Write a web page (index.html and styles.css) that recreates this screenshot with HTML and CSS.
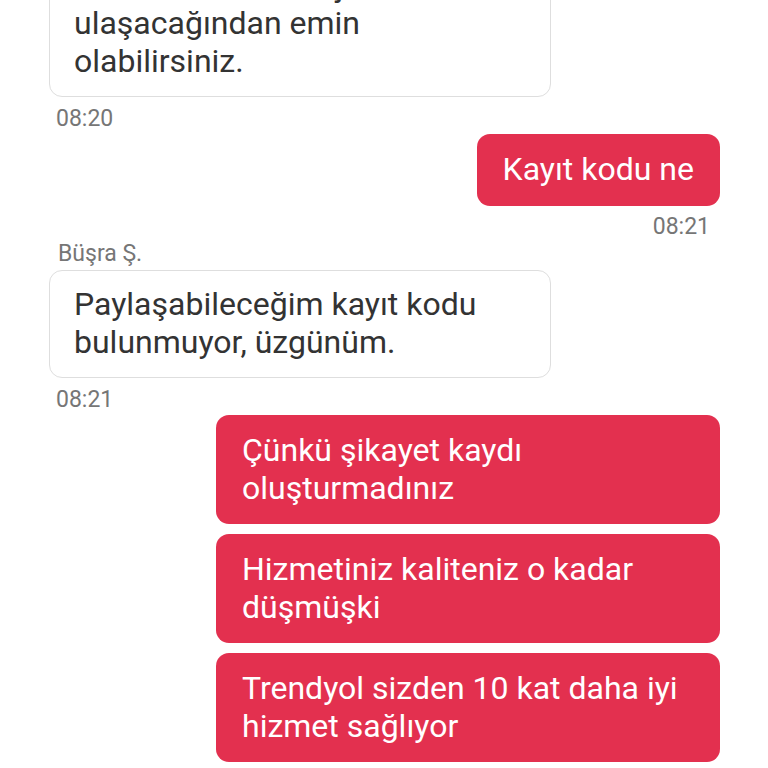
FILE: index.html
```html
<!DOCTYPE html>
<html lang="tr">
<head>
<meta charset="utf-8">
<title>Sohbet</title>
<link rel="stylesheet" href="styles.css">
</head>
<body>
<div class="chat">
  <div class="group in first">
    <div class="bubble">Bu konudaki mesajınızın ulaşacağından emin olabilirsiniz.</div>
    <div class="time">08:20</div>
  </div>
  <div class="group out">
    <div class="bubble">Kayıt kodu ne</div>
    <div class="time">08:21</div>
  </div>
  <div class="group in">
    <div class="name">Büşra Ş.</div>
    <div class="bubble">Paylaşabileceğim kayıt kodu bulunmuyor, üzgünüm.</div>
    <div class="time">08:21</div>
  </div>
  <div class="group out wide">
    <div class="bubble">Çünkü şikayet kaydı oluşturmadınız</div>
    <div class="bubble">Hizmetiniz kaliteniz o kadar düşmüşki</div>
    <div class="bubble">Trendyol sizden 10 kat daha iyi hizmet sağlıyor</div>
  </div>
</div>
</body>
</html>
```

FILE: styles.css
```css
html, body {
  margin: 0;
  padding: 0;
  background: #ffffff;
  overflow: hidden;
}

body {
  font-family: Roboto, "Noto Sans", sans-serif;
  width: 768px;
  height: 768px;
}

.chat {
  display: flex;
  flex-direction: column;
  padding: 0 48px 0 49px;
  margin-top: -49px;
}

.group {
  display: flex;
  flex-direction: column;
}

.group.in {
  align-items: flex-start;
}

.group.out {
  align-items: flex-end;
}

.bubble {
  max-width: 504px;
  box-sizing: border-box;
  font-size: 32px;
  line-height: 37.5px;
}

.in .bubble {
  width: 502px;
  background: #ffffff;
  color: #333333;
  border: 1px solid #dedede;
  border-radius: 13px;
  padding: 15.5px 24px;
  margin-top: 3px;
}

.in.first .bubble {
  margin-top: 0;
}

.out .bubble {
  background: #e3304f;
  color: #ffffff;
  border-radius: 13px;
  padding: 17px 26px;
  margin-top: 2px;
}

.out.wide .bubble {
  width: 504px;
}

.out.wide .bubble + .bubble {
  margin-top: 10px;
}

.time,
.name {
  font-size: 23px;
  line-height: 26px;
  color: #767676;
}

.in .time {
  margin-top: 9.5px;
  padding-left: 7px;
}

.out .time {
  margin-top: 8px;
  padding-right: 10px;
}

.name {
  margin-top: 1px;
  padding-left: 9px;
}
```
